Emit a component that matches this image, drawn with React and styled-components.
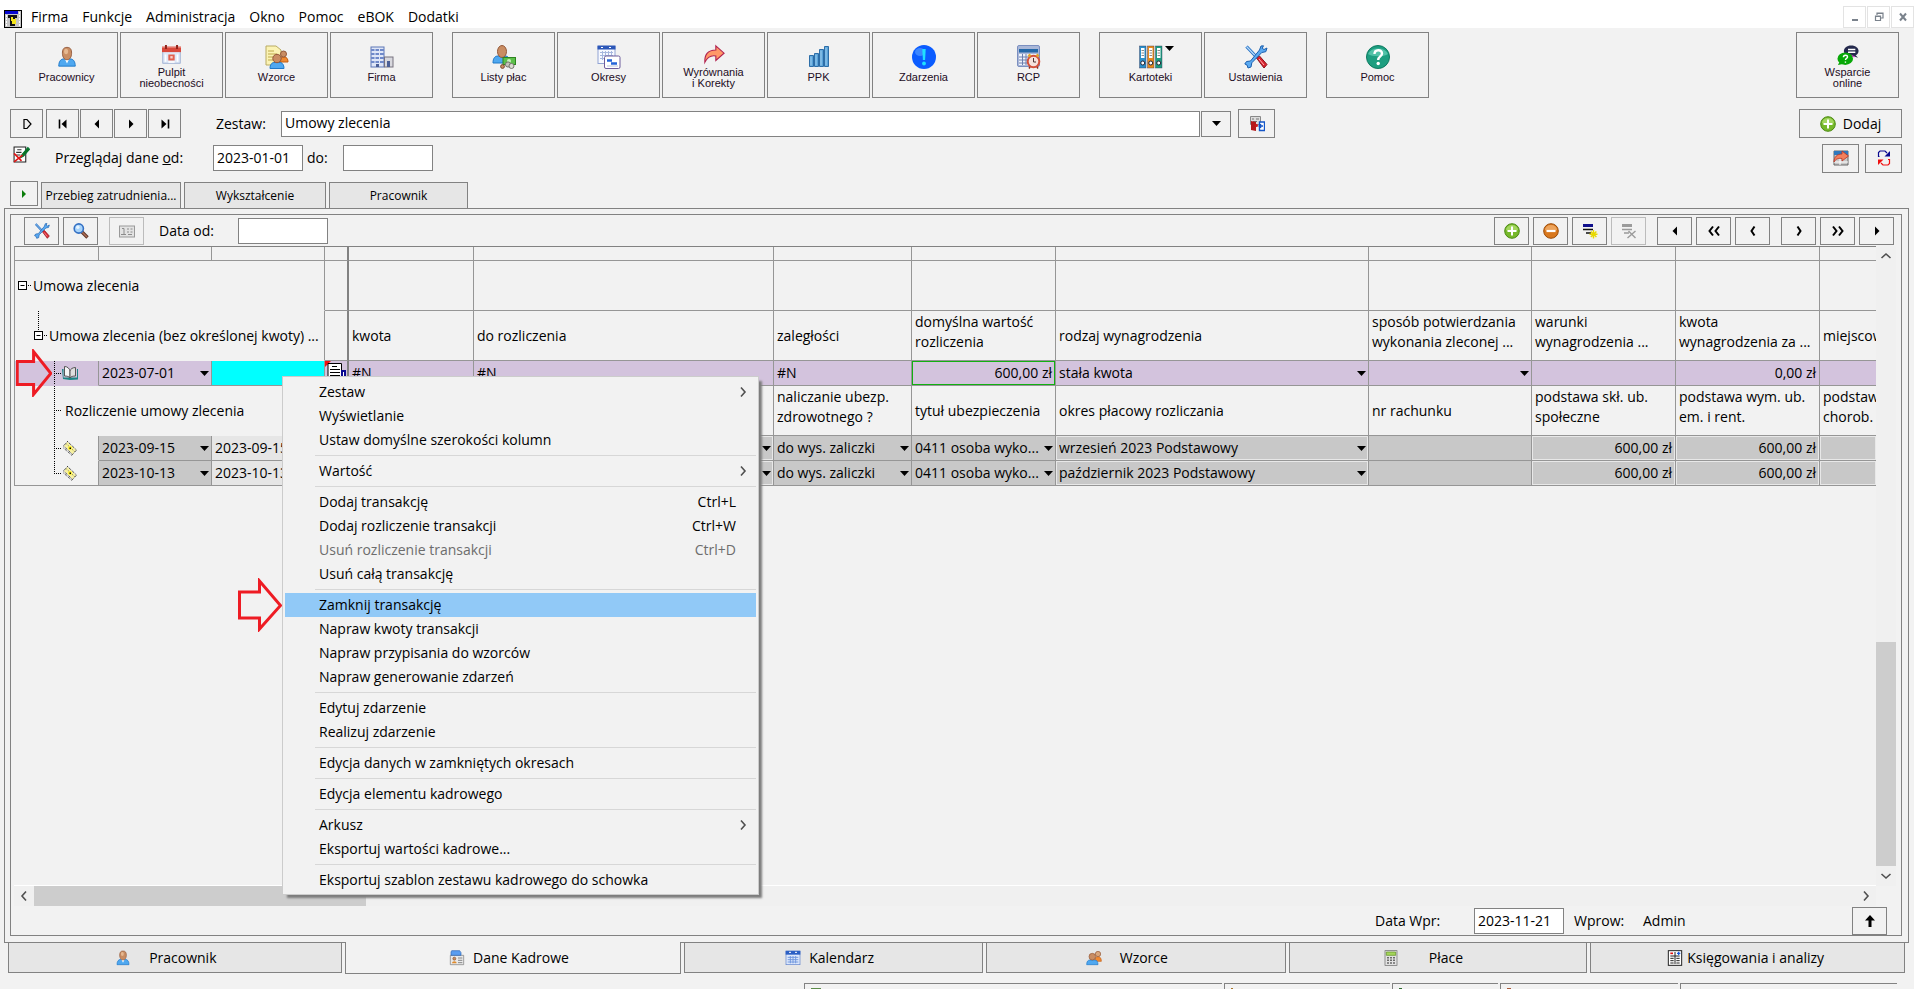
import React from 'react';
import styled, { createGlobalStyle, css } from 'styled-components';

const line = '#828282';
const softLine = '#969696';
const face = '#f2f2f2';

const GlobalStyle = createGlobalStyle`
  * {
    box-sizing: border-box;
  }

  body {
    margin: 0;
    background: ${face};
    color: #000;
    font-family: 'Open Sans', 'Noto Sans', sans-serif;
    font-size: 14px;
    line-height: 20px;
  }

  button, input, select {
    margin: 0;
    color: inherit;
    font: inherit;
  }
`;

const Page = styled.div`
  display: flex;
  flex-direction: column;
  height: 100vh;
  overflow: hidden;
`;

const Svg = styled.svg`
  display: block;
  flex: none;
`;

/* ---------- icons ---------- */

const Icon = ({ size = 16, box = 24, children }) => (
  <Svg width={size} height={size} viewBox={`0 0 ${box} ${box}`} aria-hidden="true">
    {children}
  </Svg>
);

const PersonIcon = ({ size }) => (
  <Icon size={size}>
    <path d="M3 22c0-5 2-8 6-8h6c4 0 6 3 6 8z" fill="#4fa8f0" stroke="#1f78c8" />
    <path d="M9.500 14h5l-2.500 5z" fill="#fff" />
    <path d="M12 1.500c4 0 5 2.500 5 6.500 0 4-2 7-5 7s-5-3-5-7c0-4 1-6.500 5-6.500z" fill="#c98d63" stroke="#94593a" />
    <ellipse cx="11" cy="6" rx="2.200" ry="3" fill="#e6b890" />
  </Icon>
);

const AbsenceIcon = ({ size }) => (
  <Icon size={size}>
    <rect x="1" y="7" width="22" height="16" fill="#dfe8f7" stroke="#8ea3cc" />
    <path d="M0 2h24v7H0z" fill="#d9483b" />
    <path d="M0 3h24" stroke="#ee8a80" />
    <path d="M5 0v5M19 0v5" stroke="#8f231a" strokeWidth="2.500" />
    <rect x="8" y="12" width="8" height="7.500" fill="#e2604f" />
    <rect x="10.500" y="14" width="3" height="3" fill="#f8d0ca" />
    <path d="M4.500 12v9M19.500 12v9M8 21.500h8" stroke="#fff" strokeWidth="2" />
  </Icon>
);

const PatternsIcon = ({ size }) => (
  <Icon size={size}>
    <path d="M1 1h10l5 4v15H1z" fill="#fbf3b4" stroke="#b9ab62" />
    <path d="M3 6h6M3 9h9M3 12h7M3 15h5" stroke="#bda94a" />
    <path d="M15 17c0-3 1-5 4-5s4 2 4 5z" fill="#f08a32" stroke="#c25e12" />
    <circle cx="18.500" cy="9" r="3" fill="#c98d63" stroke="#94593a" />
    <path d="M5 23.500c0-4 2-6 4-6h6c2 0 4 2 4 6z" fill="#4fa8f0" stroke="#1f78c8" />
    <circle cx="12" cy="13.500" r="4.200" fill="#c98d63" stroke="#94593a" />
  </Icon>
);

const PeopleIcon = ({ size }) => (
  <Icon size={size}>
    <path d="M13 17c0-5 2-7 5-7s5 2 5 7z" fill="#f08a32" stroke="#c25e12" />
    <circle cx="18" cy="6" r="4" fill="#d9a67c" stroke="#94593a" />
    <path d="M1 22c0-5 2-7 5-7h7c3 0 5 2 5 7z" fill="#4fa8f0" stroke="#1f78c8" />
    <circle cx="9.500" cy="10" r="5" fill="#c98d63" stroke="#94593a" />
  </Icon>
);

const BuildingIcon = ({ size }) => (
  <Icon size={size}>
    <rect x="1" y="2" width="13" height="20" fill="#dfe6f7" stroke="#5d76b6" />
    <path d="M1 5h13M1 9h13M1 13h13M1 17h13" stroke="#6f89c9" strokeWidth="2" />
    <path d="M5 3v15M9.500 3v15" stroke="#dfe6f7" />
    <rect x="14.500" y="12" width="8.500" height="10" fill="#d8d8de" stroke="#77727f" />
    <path d="M6 19h3v3H6zM17 16h3v6h-3z" fill="#4b5f96" />
  </Icon>
);

const PayrollIcon = ({ size }) => (
  <Icon size={size}>
    <path d="M1 18c0-5 2-7 5-7h7c3 0 5 2 5 7z" fill="#4fa8f0" stroke="#1f78c8" />
    <ellipse cx="10" cy="6.500" rx="4.500" ry="6" fill="#c98d63" stroke="#94593a" />
    <rect x="11" y="12.500" width="12.500" height="7" fill="#5cc04a" stroke="#2d8420" />
    <circle cx="17" cy="16" r="2" fill="#c9f0bd" />
    <circle cx="16" cy="19.500" r="2.600" fill="#c3c3bb" stroke="#74746c" />
    <circle cx="19.500" cy="21" r="2.500" fill="#dadad2" stroke="#74746c" />
    <circle cx="10.500" cy="21.500" r="1.900" fill="#c98d63" stroke="#7a4a30" />
  </Icon>
);

const PeriodsIcon = ({ size }) => (
  <Icon size={size}>
    <rect x="1" y="1.500" width="17" height="17" fill="#f7f9ff" stroke="#91a4d4" />
    <path d="M.5.5h18v4H.5z" fill="#2c57b8" />
    <path d="M4 2.500h2M12 2.500h2" stroke="#fff" />
    <path d="M3 7.500h13M3 10.500h13M3 13.500h13M5.500 6v9M8.500 6v9M11.500 6v9M14.500 6v9" stroke="#a6b7de" />
    <rect x="7.500" y="11" width="15.500" height="12.500" rx="1.500" fill="#fff" stroke="#6d5c9c" />
    <path d="M10 15.500h5M14 18.500h6" stroke="#2464d8" strokeWidth="2.500" />
    <path d="M10 21h11" stroke="#b9c2dc" />
  </Icon>
);

const AdjustIcon = ({ size }) => (
  <Icon size={size}>
    <path d="M14 2l9 8-9 8v-5c-5-1-9 1-12 7C1.500 12 5 6.500 14 6.500z" fill="#ff9868" stroke="#b0204f" strokeWidth="1.200" />
  </Icon>
);

const BarsIcon = ({ size }) => (
  <Icon size={size}>
    <g fill="#5aa2d8" stroke="#2d6ea8">
      <path d="M2.500 10.500h4v11h-4zM7.500 8.500h4v13h-4zM12.500 4.500h4v17h-4zM17.500 1.500h4v20h-4z" />
    </g>
    <path d="M4 11.500v9M9 9.500v11M14 5.500v15M19 2.500v18" stroke="#9fd0f0" />
  </Icon>
);

const EventIcon = ({ size }) => (
  <Icon size={size}>
    <circle cx="12" cy="12" r="12" fill="#0b5cff" />
    <ellipse cx="8" cy="7" rx="5" ry="4" fill="#3b86ff" />
    <path d="M10.300 4h3.400l-.6 11h-2.200z" fill="#1fe0ff" />
    <circle cx="12" cy="18.500" r="1.900" fill="#1fe0ff" />
  </Icon>
);

const ClockCalendarIcon = ({ size }) => (
  <Icon size={size}>
    <rect x=".5" y=".5" width="22" height="21" rx="1.500" fill="#a9b7d8" stroke="#7b8fc0" />
    <rect x="2" y="4" width="19" height="3.500" fill="#2468a8" />
    <path d="M2 9h19v11H2z" fill="#eef2fb" />
    <path d="M2 12h10M2 15h8M2 18h8M5.500 9v11M9 9v11" stroke="#6c7fae" />
    <circle cx="16.500" cy="16.500" r="5.800" fill="#f6e2dc" stroke="#d4503a" strokeWidth="2" />
    <path d="M11.500 11.500l2-2M21.500 11.500l-2-2" stroke="#e0a528" strokeWidth="2.500" />
    <path d="M16.500 13v4h2.500" fill="none" stroke="#4c3333" />
    <path d="M13 22l-1 1.500M20 22l1 1.500" stroke="#8c2c1c" strokeWidth="1.500" />
  </Icon>
);

const BindersIcon = ({ size }) => (
  <Icon size={size}>
    {[['#2b8fca', 0], ['#e88a1c', 8], ['#1c9c80', 16]].map(([color, x]) => (
      <g key={x}>
        <rect x={x + 0.5} y="1" width="6.500" height="22" fill={color} stroke="#335" strokeWidth=".4" />
        <rect x={x + 2} y="3" width="3.500" height="10" fill="#fff" />
        <path d={`M${x + 2.500} 5.500h2.500M${x + 2.500} 8h2.500M${x + 2.500} 10.500h2.500`} stroke="#8a8a8a" />
        <circle cx={x + 3.750} cy="18" r="2" fill="#fff" stroke="#223" />
      </g>
    ))}
  </Icon>
);

const ToolsIcon = ({ size }) => (
  <Icon size={size}>
    <path d="M2.500 1.500l9.500 10" stroke="#1f6dc4" strokeWidth="3.200" />
    <path d="M2.500 1.500l9.500 10" stroke="#b9dcfa" strokeWidth="1.200" />
    <path d="M12.500 13l3-2 7.500 8.500-3 3.500z" fill="#d9232f" stroke="#8a1119" />
    <path d="M15 14l5 6" stroke="#ffb3b3" />
    <path d="M17 1l-1.500 4-9 11-4 .5L.8 19l2.200 1 1 3 3-1 .8-4.200 10-10.300 4-.8L23 3l-3 1.500-1.800-1.200L19.500.8z" fill="#5aaaf2" stroke="#1b5fae" />
  </Icon>
);

const HelpIcon = ({ size }) => (
  <Icon size={size}>
    <circle cx="12" cy="12" r="11.500" fill="#1d9e80" stroke="#0e7a60" />
    <path d="M2 9a10.500 8 0 0 1 20 0c-4 3-16 3-20 0z" fill="#52c2a8" />
    <path d="M8.500 9c0-5 7.500-5 7.500-.5 0 3-3.800 2.800-3.800 6.500" fill="none" stroke="#fff" strokeWidth="2.400" />
    <circle cx="12.200" cy="18.500" r="1.700" fill="#fff" />
  </Icon>
);

const SupportIcon = ({ size }) => (
  <Icon size={size}>
    <path d="M15.500 1.500c5 0 8 2.800 8 6s-3 6-8 6-8-2.800-8-6 3-6 8-6z" fill="#252a4d" />
    <path d="M19 11l4 4-6-2z" fill="#252a4d" />
    <path d="M12 6h8M12 9h8" stroke="#fff" strokeWidth="1.500" />
    <path d="M15 12.500l4 1.500" stroke="#e03fd8" strokeWidth="1.500" />
    <ellipse cx="9" cy="16" rx="8.500" ry="6.800" fill="#08a808" />
    <path d="M3 19l-2 4 7-1.500z" fill="#08a808" />
    <path d="M7 14.500c0-3 4.500-3 4.500-.3 0 1.600-2.300 1.400-2.300 3.300M9.200 19v1.500" fill="none" stroke="#fff" strokeWidth="1.500" />
  </Icon>
);

const PlusIcon = ({ size }) => (
  <Icon size={size} box={16}>
    <circle cx="8" cy="8" r="7.300" fill="#76b82a" stroke="#4b8a12" />
    <path d="M2 7a6 5 0 0 1 12 0c-3 1.500-9 1.500-12 0z" fill="#a3d65e" />
    <path d="M8 3.500v9M3.500 8h9" stroke="#fff" strokeWidth="2" />
  </Icon>
);

const MinusIcon = ({ size }) => (
  <Icon size={size} box={16}>
    <circle cx="8" cy="8" r="7.300" fill="#d9781e" stroke="#9c4c08" />
    <path d="M2 7a6 5 0 0 1 12 0c-3 1.500-9 1.500-12 0z" fill="#eda45c" />
    <path d="M3.500 8h9" stroke="#fff" strokeWidth="2.200" />
  </Icon>
);

const MagnifierIcon = () => (
  <Icon box={16}>
    <path d="M9 9l5.500 5.500" stroke="#5e3528" strokeWidth="3.400" />
    <path d="M9 9l5 5" stroke="#b07058" strokeWidth="1.400" />
    <circle cx="5.800" cy="5.500" r="4.600" fill="#a8d4fb" stroke="#3571c4" strokeWidth="1.600" />
    <circle cx="4.800" cy="4.300" r="1.700" fill="#e8f5ff" />
  </Icon>
);

const CounterIcon = () => (
  <Icon box={16}>
    <rect x=".5" y="3" width="15" height="11" fill="#e3e3e3" stroke="#999" />
    <path d="M3 5.500h2v6M2 11.500h5M8 6h2M11.500 6h2M8 9h2M11.500 9h2M9 11.500h4" fill="none" stroke="#8c8c8c" />
  </Icon>
);

const ListStarIcon = () => (
  <Icon box={16}>
    <path d="M1 2.500h10" stroke="#10108c" strokeWidth="3" />
    <path d="M1 6.500h10M4 10h5" stroke="#111" strokeWidth="1.500" />
    <path d="M11.500 7v8.500M7.500 11.200h8M8.800 8.500l5.600 5.600M14.400 8.500l-5.600 5.600" stroke="#e8d800" strokeWidth="1.400" />
  </Icon>
);

const ListCrossIcon = () => (
  <Icon box={16}>
    <path d="M1 2.500h10" stroke="#9b9b9b" strokeWidth="3" />
    <path d="M1 6.500h10M3 10h5" stroke="#9b9b9b" strokeWidth="1.500" />
    <path d="M7.500 8l7 7M14.500 8l-8 7" stroke="#9b9b9b" strokeWidth="1.400" />
  </Icon>
);

const DoorIcon = () => (
  <Icon box={16}>
    <path d="M1.500.5h10v8h-10z" fill="#dcdcdc" stroke="#888" />
    <path d="M3 3h2M7 3h3M4 5.500h4" stroke="#777" />
    <path d="M2 5l5 1v9l-5-1z" fill="#b5191b" />
    <path d="M10.500 6h5v8.500h-5z" fill="#fff" stroke="#1456c8" strokeWidth="1.400" />
    <path d="M9.500 10H14M11.500 8v4" stroke="#1456c8" strokeWidth="1.500" />
    <circle cx="7.500" cy="9.500" r="1.500" fill="#d01818" />
  </Icon>
);

const ExportIcon = () => (
  <Icon box={16}>
    <path d="M1 1h14v14H1z" fill="#c8c8c8" stroke="#666" />
    <path d="M1 1h14v4H1z" fill="#2f79bd" />
    <path d="M1 12h14M7 9v6" stroke="#fff" />
    <path d="M9 1l6.500 5L9 11V8.500C6 8 3 8.500 1 12 1 7 4 4 9 4z" fill="#f4805c" stroke="#b83224" strokeWidth=".8" />
  </Icon>
);

const RefreshIcon = () => (
  <Icon box={16}>
    <path d="M3.500 6.500h-1v-4l1.500-1.500h5l2 2" fill="none" stroke="#0a0a90" strokeWidth="1.200" />
    <path d="M14 1v5.500H8.500z" fill="#0a0a90" />
    <path d="M12 9.500h1.500v4L12 15H7l-2-2" fill="none" stroke="#f01010" strokeWidth="1.200" />
    <path d="M2 15V9.500h5.500z" fill="#f01010" />
  </Icon>
);

const AppIcon = () => (
  <Icon size={18} box={18}>
    <rect x=".5" y=".5" width="17" height="17" fill="#c6c6c6" stroke="#000" />
    <path d="M1 1h13v3H1z" fill="#0808d0" />
    <path d="M4 5h9v3h-2v8H6V8H4z" fill="#111" />
    <path d="M7 7h2v2h3v5H8v-3H7z" fill="#f5e61b" />
    <path d="M2.500 5v11M15.500 2v14" stroke="#fff" strokeDasharray="2 1" />
  </Icon>
);

const DocCheckIcon = () => (
  <Icon size={17} box={16}>
    <path d="M1 1h11v14H1z" fill="#fff" stroke="#222" />
    <path d="M4 3.500h4M3 6h5M3 8.500h4" stroke="#333" />
    <path d="M7 11l3-1.500L15.500 3 14 1.500 8.500 8z" fill="#12701c" stroke="#073" />
    <path d="M1 7l7 7M9 8.500L1 15" stroke="#e11414" strokeWidth="1.500" />
  </Icon>
);

const BookIcon = () => (
  <Icon box={16}>
    <path d="M0 4h1.500v8.500H15V4h1v10.500l-8 .5-7-1z" fill="#1b8584" />
    <path d="M2.500 1.500c3 0 5 2 5.500 4.500v7c-1-1.500-3-2-5.500-2z" fill="#f6f6f6" stroke="#555" />
    <path d="M8 6c.5-2 2.500-3.500 5.500-3.500V11c-2.500 0-4.500.5-5.500 2z" fill="#dedede" stroke="#555" />
  </Icon>
);

const BanknoteIcon = () => (
  <Icon box={16}>
    <path d="M5.500 1.500l9 8.500-4 4.500-9-8.500z" fill="#f7f1a0" stroke="#fff" />
    <path d="M5.500 1.500l9 8.500-4 4.500-9-8.500z" fill="none" stroke="#000" strokeDasharray="1 1" />
    <path d="M4.500 4l8 7.500" stroke="#7d7a3a" strokeDasharray="1 1.500" />
    <circle cx="8" cy="8" r="2" fill="#fff12a" />
    <path d="M7.500 7.500h1.500v1.500H7.500z" fill="#000" />
    <path d="M1.500 8l9 8" stroke="#333" strokeDasharray="1 1" />
  </Icon>
);

const NoteIcon = () => (
  <Svg width="23" height="24" viewBox="0 0 23 24" aria-hidden="true">
    <path d="M0 0h6l-6 6z" fill="#f01010" />
    <path d="M3 2.500h13.500v15H3z" fill="#fff" stroke="#000" />
    <path d="M7 5.500h5M5 8.500h10M5 11.500h10M5 14.500h10" stroke="#000" />
    <path d="M16 9h5v8h-5z" fill="#0a0a90" />
    <path d="M18.500 11v4" stroke="#fff" />
  </Svg>
);

const CardIcon = () => (
  <Icon>
    <path d="M2 8h20v14H2z" fill="#e9e9e9" stroke="#777" />
    <path d="M4 1h12l2 3v4H3V3z" fill="#5a9df0" stroke="#2a64b4" />
    <circle cx="8" cy="13" r="2.200" fill="#c98d63" stroke="#80502c" />
    <path d="M4.500 20c0-4 7-4 7 0z" fill="#e08a2a" />
    <path d="M13.500 12H20M13.500 15.500H20M13.500 19H20" stroke="#888" strokeWidth="1.500" />
  </Icon>
);

const CalendarIcon = () => (
  <Icon>
    <rect x="1.500" y="2" width="21" height="20" fill="#dce7fb" stroke="#5d80cc" />
    <path d="M1 1h22v6H1z" fill="#2b5fc4" />
    <path d="M6 3.500h3M15 3.500h3" stroke="#fff" strokeWidth="1.500" />
    <path d="M4 11h16M4 14.500h16M4 18h16M8 9v11M12 9v11M16 9v11" stroke="#6e94dd" strokeWidth="1.400" />
  </Icon>
);

const CalculatorIcon = () => (
  <Icon>
    <rect x="3" y="1" width="18" height="22" fill="#e2e2e2" stroke="#666" />
    <path d="M5 3h14v5H5z" fill="#a4d65a" stroke="#5d8c20" />
    <path d="M6 11.500h12M6 15.500h12M6 19.500h12" stroke="#6b6b6b" strokeWidth="2.200" strokeDasharray="3 1.500" />
  </Icon>
);

const LedgerIcon = () => (
  <Icon>
    <rect x="2" y="1" width="20" height="22" fill="#fff" stroke="#222" strokeWidth="1.500" />
    <path d="M5 5h4" stroke="#e01010" strokeWidth="2.500" />
    <path d="M15 5h5M17.500 2.500v5" stroke="#1558e0" strokeWidth="2" />
    <path d="M12 3v18M5 9h14M5 12.500h5M14 12.500h5M5 16h5M14 16h5M5 19.500h5M14 19.500h5" stroke="#222" strokeWidth="1.500" />
  </Icon>
);

const glyphs = {
  record: <path d="M5 3.500h3l4 4.500-4 4.500H5z" fill="none" stroke="#000" strokeWidth="1.200" />,
  first: (
    <>
      <path d="M4.500 3.500v9" stroke="#000" strokeWidth="1.600" />
      <path d="M11.500 3.500v9L6.500 8z" />
    </>
  ),
  last: (
    <>
      <path d="M11.500 3.500v9" stroke="#000" strokeWidth="1.600" />
      <path d="M4.500 3.500v9l5-4.500z" />
    </>
  ),
  left: <path d="M10 3.500v9L5.500 8z" />,
  right: <path d="M6 3.500v9L10.500 8z" />,
  chevLeft: <path d="M9.500 3.500L6.500 8l3 4.500" fill="none" stroke="#000" strokeWidth="2" />,
  chevRight: <path d="M6.500 3.500l3 4.500-3 4.500" fill="none" stroke="#000" strokeWidth="2" />,
  chevLeft2: <path d="M7 3.500L3.500 8 7 12.500M13 3.500L9.500 8l3.500 4.500" fill="none" stroke="#000" strokeWidth="2" />,
  chevRight2: <path d="M3 3.500L6.500 8 3 12.500M9 3.500l3.500 4.500L9 12.500" fill="none" stroke="#000" strokeWidth="2" />,
  up: <path d="M8 2l5 5.500H9.500V14h-3V7.500H3z" />,
  green: <path d="M6 4v8l4-4z" fill="#0a7d0a" />,
};

const Glyph = ({ name }) => <Icon box={16}>{glyphs[name]}</Icon>;

const Caret = () => (
  <Svg width="9" height="5" viewBox="0 0 9 5" aria-hidden="true">
    <path d="M0 0h9L4.500 5z" />
  </Svg>
);

const Angle = ({ dir = 'right' }) => {
  const turn = { right: 0, down: 90, left: 180, up: 270 }[dir];
  return (
    <Svg width="12" height="12" viewBox="0 0 12 12" aria-hidden="true">
      <path d="M4 1.500L8 6l-4 4.500" fill="none" stroke="#505050" strokeWidth="1.600" transform={`rotate(${turn} 6 6)`} />
    </Svg>
  );
};

/* ---------- menu bar ---------- */

const MenuBar = styled.header`
  display: flex;
  align-items: flex-end;
  flex: none;
  gap: 1px;
  height: 28px;
  padding-left: 4px;
  background: #fff;
`;

const MenuLinks = styled.nav`
  display: flex;
  flex: 1;
  gap: 14px;
  padding: 0 0 1px 8px;
`;

const MenuLink = styled.a`
  color: inherit;
  text-decoration: none;
`;

const WindowButton = styled.button`
  display: flex;
  align-items: center;
  justify-content: center;
  width: 23px;
  height: 22px;
  padding: 0;
  border: 1px solid #e3e3e3;
  background: #fff;
`;

/* ---------- big toolbar ---------- */

const Toolbar = styled.div`
  display: flex;
  flex: none;
  gap: 19px;
  padding: 4px 15px 11px;
`;

const ToolGroup = styled.div`
  display: flex;
  gap: 2px;

  &:last-child {
    margin-left: auto;
  }
`;

const ToolButton = styled.button`
  display: flex;
  flex-direction: column;
  align-items: center;
  width: 103px;
  height: 66px;
  padding: 12px 0 0;
  border: 1px solid ${line};
  background: ${face};
  color: #1d0c24;
  font-family: 'Liberation Sans', sans-serif;
  font-size: 11px;
  line-height: 11px;
`;

const ToolIcon = styled.span`
  position: relative;
  display: flex;
  align-items: center;
  height: ${({ $compact }) => ($compact ? '19px' : '24px')};
  margin-bottom: 3px;
`;

const ToolCaret = styled.span`
  position: absolute;
  top: 1px;
  left: 26px;
`;

const ToolLabel = styled.span`
  white-space: pre-line;
`;

const toolGroups = [
  [
    ['Pracownicy', PersonIcon, 22],
    ['Pulpit\nnieobecności', AbsenceIcon, 19],
    ['Wzorce', PatternsIcon, 24],
    ['Firma', BuildingIcon, 24],
  ],
  [
    ['Listy płac', PayrollIcon, 24],
    ['Okresy', PeriodsIcon, 24],
    ['Wyrównania\ni Korekty', AdjustIcon, 22],
    ['PPK', BarsIcon, 24],
    ['Zdarzenia', EventIcon, 24],
    ['RCP', ClockCalendarIcon, 24],
  ],
  [
    ['Kartoteki', BindersIcon, 24],
    ['Ustawienia', ToolsIcon, 24],
  ],
  [['Pomoc', HelpIcon, 24]],
  [['Wsparcie\nonline', SupportIcon, 22]],
];

/* ---------- form rows ---------- */

const FormRow = styled.div`
  display: flex;
  align-items: center;
  flex: none;
  height: ${({ $height }) => $height}px;
  margin-bottom: ${({ $after = 0 }) => $after}px;
  padding: 0 12px 0 10px;
`;

const SmallButton = styled.button`
  display: flex;
  align-items: center;
  justify-content: center;
  flex: none;
  width: ${({ $width = 35 }) => $width}px;
  height: ${({ $height = 29 }) => $height}px;
  padding: 0;
  gap: 7px;
  border: 1px solid ${line};
  background: ${face};

  &:disabled {
    border-color: #bcbcbc;
  }
`;

const ButtonRow = styled.div`
  display: flex;
  gap: ${({ $gap }) => $gap}px;
  margin-left: ${({ $left = 0 }) => $left}px;
`;

const RightSide = styled.div`
  display: flex;
  gap: ${({ $gap = 6 }) => $gap}px;
  margin-left: auto;
`;

const RowIcon = styled.span`
  padding: 0 0 7px 3px;
`;

const field = css`
  height: 26px;
  padding: 0 3px 1px;
  border: 1px solid ${line};
  border-radius: 0;
  outline: none;
  background: #fff;
`;

const TextInput = styled.input`
  ${field}
  flex: none;
  width: 90px;
`;

const SetSelect = styled.select`
  ${field}
  appearance: none;
  flex: 0 1 919px;
  min-width: 0;
  margin-right: 1px;
`;

const FieldLabel = styled.label`
  flex: none;
  width: ${({ $width }) => $width}px;
  margin-left: ${({ $left = 0 }) => $left}px;
`;

/* ---------- tabs ---------- */

const TabRow = styled.div`
  display: flex;
  align-items: flex-start;
  flex: none;
  gap: 3px;
  height: 27px;
  padding-left: 10px;
`;

const TopTab = styled.button`
  width: ${({ $width }) => $width}px;
  height: 26px;
  margin-top: 1px;
  padding: 0;
  border: 1px solid ${line};
  border-bottom: 0;
  background: #e6e6e6;
  font-size: 12px;
  white-space: nowrap;
`;

const Panel = styled.main`
  display: flex;
  flex: 1;
  min-height: 0;
  margin: 0 5px 0 4px;
  padding: 5px 6px 6px 5px;
  border: 1px solid ${line};
`;

const InnerPanel = styled.section`
  display: flex;
  flex-direction: column;
  flex: 1;
  min-width: 0;
  border: 1px solid ${line};
`;

const GridToolbar = styled.div`
  display: flex;
  align-items: center;
  flex: none;
  gap: 4px;
  height: 31px;
  padding: 0 7px 0 13px;
`;

/* ---------- data grid ---------- */

const GridArea = styled.div`
  position: relative;
  display: grid;
  grid-template-columns: minmax(0, 1fr) 20px;
  grid-template-rows: minmax(0, 1fr) 20px;
  flex: 1;
  min-height: 0;
  margin: 0 5px 0 3px;
`;

const GridView = styled.div`
  overflow: hidden;
  border-bottom: 1px solid #fff;
`;

const Grid = styled.table`
  width: 100%;
  table-layout: fixed;
  border-collapse: separate;
  border-spacing: 0;
  border-top: 1px solid ${line};
  border-left: 1px solid ${softLine};
`;

const Row = styled.tr`
  height: ${({ $height }) => $height}px;
`;

const tones = {
  plain: 'transparent',
  violet: '#d3c3dd',
  grey: '#c8c8c8',
  light: '#e6e6e6',
  cyan: '#00ffff',
};

const Cell = styled.td`
  position: relative;
  height: inherit;
  padding: 0 3px;
  overflow: ${({ $open }) => ($open ? 'visible' : 'hidden')};
  border-right: ${({ $split }) => ($split ? 2 : 1)}px solid ${({ $split }) => ($split ? line : softLine)};
  border-bottom: 1px solid ${softLine};
  background: ${({ $tone = 'plain' }) => tones[$tone]};
  text-align: ${({ $right }) => ($right ? 'right' : 'left')};
  white-space: pre;
  font-weight: 400;
  ${({ $inset }) => $inset && 'box-shadow: inset 0 0 0 1px #e8e8e8;'}
  ${({ $focus }) => $focus && 'box-shadow: inset 0 0 0 1px #12b012;'}
  ${({ $top }) => $top && 'padding-top: 1px; vertical-align: top;'}
  ${({ $noLine, $tone = 'plain' }) => $noLine && `border-bottom-color: ${tones[$tone]};`}
  ${({ $tree }) => $tree && 'padding: 0;'}

  &:last-child {
    border-right: 0;
  }
`;

const TreeCell = styled.div`
  display: flex;
  align-items: center;
  height: ${({ $height }) => $height}px;
`;

const DropCell = styled.div`
  display: flex;
  align-items: center;
  margin: 0 -1px 0 0;
`;

const CellSelect = styled.select`
  appearance: none;
  flex: 1;
  min-width: 0;
  height: 22px;
  padding: 0;
  border: 0;
  outline: none;
  background: transparent;
`;

const Branch = ({ width, height, x, from = 0, to, box, stub }) => {
  const mid = Math.floor(height / 2) + 0.5;
  return (
    <Svg width={width} height={height} viewBox={`0 0 ${width} ${height}`} aria-hidden="true">
      <g stroke="#000" strokeDasharray="1 1" fill="none">
        {to > 0 && <path d={`M${x + 0.5} ${from}V${to}`} />}
        <path d={`M${x} ${mid}H${x + stub}`} />
      </g>
      {box && (
        <>
          <rect x={x - 3.5} y={mid - 4} width="8" height="8" fill="#fff" stroke="#000" />
          <path d={`M${x - 1.5} ${mid}h4`} stroke="#000" />
        </>
      )}
    </Svg>
  );
};

const Drop = ({ value, label }) => (
  <DropCell>
    <CellSelect aria-label={label} defaultValue={value}>
      <option>{value}</option>
    </CellSelect>
    <Caret />
  </DropCell>
);

const PointerSpot = styled.span`
  position: absolute;
  z-index: 3;
  top: 50%;
  left: ${({ $left }) => $left}px;
  transform: translateY(-50%);
  pointer-events: none;
`;

const Pointer = ({ left, width, height }) => (
  <PointerSpot $left={left}>
    <Svg width={width} height={height} viewBox="0 0 44 54" preserveAspectRatio="none" aria-hidden="true">
      <path d="M1.500 14H21.500V3L42.500 27.500 21.500 51V40H1.500z" fill="none" stroke="#ee1c24" strokeWidth="3" vectorEffect="non-scaling-stroke" />
    </Svg>
  </PointerSpot>
);

const columns = [84, 113, 113, 24, 125, 300, 138, 144, 313, 163, 144, 144];

const transactionHeads = [
  'kwota',
  'do rozliczenia',
  'zaległości',
  'domyślna wartość\nrozliczenia',
  'rodzaj wynagrodzenia',
  'sposób potwierdzania\nwykonania zleconej ...',
  'warunki\nwynagrodzenia ...',
  'kwota\nwynagrodzenia za ...',
  'miejscowość',
];

const settlementHeads = [
  '',
  '',
  'naliczanie ubezp.\nzdrowotnego ?',
  'tytuł ubezpieczenia',
  'okres płacowy rozliczania',
  'nr rachunku',
  'podstawa skł. ub.\nspołeczne',
  'podstawa wym. ub.\nem. i rent.',
  'podstawa\nchorob.',
];

const settlements = [
  { date: '2023-09-15', paid: '2023-09-15', period: 'wrzesień 2023 Podstawowy' },
  { date: '2023-10-13', paid: '2023-10-13', period: 'październik 2023 Podstawowy' },
];

const HeadCells = ({ heads }) =>
  heads.map((text, i) => (
    <Cell as="th" key={i} $top={text.includes('\n')}>
      {text}
    </Cell>
  ));

const DataGrid = () => (
  <Grid>
    <colgroup>
      {columns.map((width, i) => (
        <col key={i} style={{ width }} />
      ))}
      <col />
    </colgroup>
    <tbody>
      <Row $height={14}>
        {[...columns, 0].map((_, i) => (
          <Cell key={i} $split={i === 3} />
        ))}
      </Row>
      <Row $height={50}>
        <Cell as="th" colSpan={3} $noLine $tree>
          <TreeCell $height={49}>
            <Branch width={18} height={49} x={7} stub={9} box />
            Umowa zlecenia
          </TreeCell>
        </Cell>
        <Cell $split />
        {transactionHeads.map((_, i) => (
          <Cell key={i} />
        ))}
      </Row>
      <Row $height={50}>
        <Cell as="th" colSpan={3} $noLine $tree>
          <TreeCell $height={49}>
            <Branch width={34} height={49} x={23} to={20} stub={9} box />
            Umowa zlecenia (bez określonej kwoty) ...
          </TreeCell>
        </Cell>
        <Cell $split />
        <HeadCells heads={transactionHeads} />
      </Row>
      <Row $height={25}>
        <Cell $tone="violet" $noLine $tree $open>
          <Pointer left={1} width={36} height={48} />
          <TreeCell $height={24}>
            <Branch width={47} height={24} x={39} to={24} stub={7} />
            <BookIcon />
          </TreeCell>
        </Cell>
        <Cell $tone="violet">
          <Drop value="2023-07-01" label="Data transakcji" />
        </Cell>
        <Cell $tone="cyan" />
        <Cell $tone="violet" $split $tree>
          <NoteIcon />
        </Cell>
        <Cell $tone="violet">#N</Cell>
        <Cell $tone="violet">#N</Cell>
        <Cell $tone="violet">#N</Cell>
        <Cell $tone="violet" $right $focus>600,00 zł</Cell>
        <Cell $tone="violet">
          <Drop value="stała kwota" label="rodzaj wynagrodzenia" />
        </Cell>
        <Cell $tone="violet">
          <Drop value="" label="sposób potwierdzania" />
        </Cell>
        <Cell $tone="violet" />
        <Cell $tone="violet" $right>0,00 zł</Cell>
        <Cell $tone="violet" />
      </Row>
      <Row $height={50}>
        <Cell as="th" colSpan={3} $noLine $tree>
          <TreeCell $height={49}>
            <Branch width={50} height={49} x={39} to={49} stub={7} />
            Rozliczenie umowy zlecenia
          </TreeCell>
        </Cell>
        <Cell $split />
        <HeadCells heads={settlementHeads} />
      </Row>
      {settlements.map(({ date, paid, period }, i) => (
        <Row $height={25} key={date}>
          <Cell $noLine={i === 0} $tree>
            <TreeCell $height={24}>
              <Branch width={47} height={24} x={39} to={i === 0 ? 24 : 12} stub={7} />
              <BanknoteIcon />
            </TreeCell>
          </Cell>
          <Cell $tone="grey">
            <Drop value={date} label="Data rozliczenia" />
          </Cell>
          <Cell $tone="light">{paid}</Cell>
          <Cell $tone="grey" $split />
          <Cell $tone="grey" />
          <Cell $tone="grey" $inset>
            <Drop value="" label="rozliczenie" />
          </Cell>
          <Cell $tone="grey">
            <Drop value="do wys. zaliczki" label="naliczanie ubezp. zdrowotnego" />
          </Cell>
          <Cell $tone="grey">
            <Drop value="0411 osoba wyko..." label="tytuł ubezpieczenia" />
          </Cell>
          <Cell $tone="grey" $inset>
            <Drop value={period} label="okres płacowy rozliczania" />
          </Cell>
          <Cell $tone="grey" />
          <Cell $tone="grey" $inset $right>600,00 zł</Cell>
          <Cell $tone="grey" $inset $right>600,00 zł</Cell>
          <Cell $tone="grey" $inset />
        </Row>
      ))}
    </tbody>
  </Grid>
);

/* ---------- scroll bars ---------- */

const VerticalBar = styled.div`
  display: grid;
  grid-template-rows: 20px 374fr 223fr 20px;
  justify-items: center;
  align-items: center;
  background: #f0f0f0;
`;

const VerticalThumb = styled.div`
  grid-row: 3;
  width: 100%;
  height: 100%;
  background: #cdcdcd;
`;

const HorizontalBar = styled.div`
  display: grid;
  grid-template-columns: 20px 332fr 1490fr 20px;
  align-items: center;
  justify-items: center;
  background: #f0f0f0;
`;

const HorizontalThumb = styled.div`
  width: 100%;
  height: 100%;
  background: #cdcdcd;
`;

const BarEnd = styled.span`
  grid-row: ${({ $row }) => $row};
  grid-column: ${({ $column }) => $column};
`;

/* ---------- context menu ---------- */

const ContextMenu = styled.div`
  position: absolute;
  z-index: 2;
  top: 130px;
  left: 268px;
  width: 477px;
  padding: 3px 2px 2px;
  border: 1px solid #ccc;
  background: ${face};
  box-shadow: 4px 4px 2px -1px #7d7d7d;
`;

const MenuItem = styled.button`
  position: relative;
  display: flex;
  align-items: center;
  width: 100%;
  height: 24px;
  padding: 0 7px 0 34px;
  border: 0;
  background: ${({ $active }) => ($active ? '#91c9f7' : 'transparent')};
  text-align: left;
  white-space: nowrap;

  &:disabled {
    color: #6d6d6d;
  }
`;

const MenuText = styled.span`
  flex: 1;
`;

const Shortcut = styled.span`
  margin-right: 13px;
`;

const Divider = styled.hr`
  margin: 3px 0 3px 30px;
  border: 0;
  border-top: 1px solid #d7d7d7;
`;

const menuSections = [
  [{ text: 'Zestaw', sub: true }, { text: 'Wyświetlanie' }, { text: 'Ustaw domyślne szerokości kolumn' }],
  [{ text: 'Wartość', sub: true }],
  [
    { text: 'Dodaj transakcję', keys: 'Ctrl+L' },
    { text: 'Dodaj rozliczenie transakcji', keys: 'Ctrl+W' },
    { text: 'Usuń rozliczenie transakcji', keys: 'Ctrl+D', disabled: true },
    { text: 'Usuń całą transakcję' },
  ],
  [
    { text: 'Zamknij transakcję', active: true },
    { text: 'Napraw kwoty transakcji' },
    { text: 'Napraw przypisania do wzorców' },
    { text: 'Napraw generowanie zdarzeń' },
  ],
  [{ text: 'Edytuj zdarzenie' }, { text: 'Realizuj zdarzenie' }],
  [{ text: 'Edycja danych w zamkniętych okresach' }],
  [{ text: 'Edycja elementu kadrowego' }],
  [{ text: 'Arkusz', sub: true }, { text: 'Eksportuj wartości kadrowe...' }],
  [{ text: 'Eksportuj szablon zestawu kadrowego do schowka' }],
];

const GridMenu = () => (
  <ContextMenu role="menu">
    {menuSections.map((items, i) => (
      <React.Fragment key={i}>
        {i > 0 && <Divider />}
        {items.map(({ text, keys, sub, active, disabled }) => (
          <MenuItem key={text} role="menuitem" $active={active} disabled={disabled}>
            {active && <Pointer left={-47} width={44} height={54} />}
            <MenuText>{text}</MenuText>
            {keys && <Shortcut>{keys}</Shortcut>}
            {sub && <Angle />}
          </MenuItem>
        ))}
      </React.Fragment>
    ))}
  </ContextMenu>
);

/* ---------- bottom ---------- */

const EntryRow = styled.div`
  display: flex;
  align-items: center;
  flex: none;
  height: 29px;
  padding-right: 14px;
`;

const EntryUser = styled.span`
  width: 209px;
`;

const BottomTabs = styled.nav`
  display: grid;
  grid-template-columns: 334fr 337fr 299fr 300fr 299fr 315fr;
  align-items: start;
  flex: none;
  gap: 3px;
  height: 40px;
  padding: 0 9px 0 8px;
`;

const BottomTab = styled.button`
  display: flex;
  align-items: center;
  justify-content: center;
  gap: ${({ $gap }) => $gap}px;
  min-width: 0;
  height: ${({ $active }) => ($active ? 32 : 30)}px;
  margin-top: ${({ $active }) => ($active ? -1 : 0)}px;
  padding: 0 ${({ $gap }) => $gap}px 0 0;
  border: 1px solid ${line};
  border-top: 0;
  background: ${({ $active }) => ($active ? face : '#e6e6e6')};
  white-space: nowrap;
`;

const bottomTabs = [
  ['Pracownik', PersonIcon, 18],
  ['Dane Kadrowe', CardIcon, 8],
  ['Kalendarz', CalendarIcon, 8],
  ['Wzorce', PeopleIcon, 18],
  ['Płace', CalculatorIcon, 30],
  ['Księgowania i analizy', LedgerIcon, 4],
];

const StatusBar = styled.footer`
  display: grid;
  grid-template-columns: 418fr 166fr 106fr 178fr 217fr;
  flex: none;
  gap: 2px;
  height: 6px;
  padding: 0 17px 0 804px;
`;

const StatusCell = styled.div`
  padding: 4px 0 0 6px;
  border-top: 1px solid ${line};
  border-left: 1px solid ${line};
`;

const StatusMark = styled.div`
  width: ${({ $width }) => $width}px;
  height: 1px;
  background: ${({ $color }) => $color};
`;

const statusMarks = [
  ['#5d8c4a', 10],
  ['#a8752a', 2],
  ['#2d6a2d', 3],
  ['#a8593a', 4],
  ['transparent', 1],
];

const App = () => (
  <Page>
    <GlobalStyle />
    <MenuBar>
      <AppIcon />
      <MenuLinks>
        {['Firma', 'Funkcje', 'Administracja', 'Okno', 'Pomoc', 'eBOK', 'Dodatki'].map((name) => (
          <MenuLink href="#" key={name}>
            {name}
          </MenuLink>
        ))}
      </MenuLinks>
      <WindowButton aria-label="Minimalizuj">
        <Icon size={12} box={12}>
          <path d="M3 9h6" stroke="#7a828c" strokeWidth="2" />
        </Icon>
      </WindowButton>
      <WindowButton aria-label="Przywróć">
        <Icon size={12} box={12}>
          <path d="M4 4V2h6v5H8M2.500 5h5v4.500h-5zM4 2.500h6M2.500 5.500h5" fill="none" stroke="#7a828c" strokeWidth="1.200" />
        </Icon>
      </WindowButton>
      <WindowButton aria-label="Zamknij">
        <Icon size={12} box={12}>
          <path d="M3 2.500l6 7M9 2.500l-6 7" stroke="#7a828c" strokeWidth="2" />
        </Icon>
      </WindowButton>
    </MenuBar>

    <Toolbar>
      {toolGroups.map((group, i) => (
        <ToolGroup key={i}>
          {group.map(([label, ToolGraphic, size]) => (
            <ToolButton key={label}>
              <ToolIcon $compact={label.includes('\n')}>
                <ToolGraphic size={size} />
                {label === 'Kartoteki' && (
                  <ToolCaret>
                    <Caret />
                  </ToolCaret>
                )}
              </ToolIcon>
              <ToolLabel>{label}</ToolLabel>
            </ToolButton>
          ))}
        </ToolGroup>
      ))}
    </Toolbar>

    <FormRow $height={29}>
      <SmallButton $width={33} aria-label="Rekord">
        <Glyph name="record" />
      </SmallButton>
      <ButtonRow $gap={1} $left={3}>
        <SmallButton $width={33} aria-label="Pierwszy"><Glyph name="first" /></SmallButton>
        <SmallButton $width={33} aria-label="Poprzedni"><Glyph name="left" /></SmallButton>
        <SmallButton $width={33} aria-label="Następny"><Glyph name="right" /></SmallButton>
        <SmallButton $width={33} aria-label="Ostatni"><Glyph name="last" /></SmallButton>
      </ButtonRow>
      <FieldLabel htmlFor="zestaw" $left={35} $width={65}>Zestaw:</FieldLabel>
      <SetSelect id="zestaw" defaultValue="Umowy zlecenia">
        <option>Umowy zlecenia</option>
      </SetSelect>
      <SmallButton $width={30} $height={26} aria-label="Rozwiń">
        <Caret />
      </SmallButton>
      <ButtonRow $gap={0} $left={7}>
        <SmallButton $width={37} aria-label="Zmień zestaw"><DoorIcon /></SmallButton>
      </ButtonRow>
      <RightSide>
        <SmallButton $width={103}>
          <PlusIcon size={16} />
          Dodaj
        </SmallButton>
      </RightSide>
    </FormRow>

    <FormRow $height={40} $after={3}>
      <RowIcon>
        <DocCheckIcon />
      </RowIcon>
      <FieldLabel htmlFor="od" $left={25} $width={158}>
        Przeglądaj dane <u>o</u>d:
      </FieldLabel>
      <TextInput id="od" defaultValue="2023-01-01" />
      <FieldLabel htmlFor="do" $left={4} $width={36}>do:</FieldLabel>
      <TextInput id="do" />
      <RightSide>
        <SmallButton $width={37} aria-label="Eksportuj"><ExportIcon /></SmallButton>
        <SmallButton $width={37} aria-label="Odśwież"><RefreshIcon /></SmallButton>
      </RightSide>
    </FormRow>

    <TabRow>
      <SmallButton $width={28} $height={25} aria-label="Pokaż">
        <Glyph name="green" />
      </SmallButton>
      <TopTab $width={140}>Przebieg zatrudnienia...</TopTab>
      <TopTab $width={142}>Wykształcenie</TopTab>
      <TopTab $width={139}>Pracownik</TopTab>
    </TabRow>

    <Panel>
      <InnerPanel>
        <GridToolbar>
          <SmallButton $height={28} aria-label="Narzędzia"><ToolsIcon size={16} /></SmallButton>
          <SmallButton $height={28} aria-label="Szukaj"><MagnifierIcon /></SmallButton>
          <ButtonRow $gap={0} $left={7}>
            <SmallButton $height={28} aria-label="Licznik" disabled><CounterIcon /></SmallButton>
          </ButtonRow>
          <FieldLabel htmlFor="data-od" $left={11} $width={75}>Data od:</FieldLabel>
          <TextInput id="data-od" />
          <RightSide $gap={11}>
            <ButtonRow $gap={4}>
              <SmallButton $height={28} aria-label="Dodaj wiersz"><PlusIcon size={16} /></SmallButton>
              <SmallButton $height={28} aria-label="Usuń wiersz"><MinusIcon size={16} /></SmallButton>
              <SmallButton $height={28} aria-label="Nowa lista"><ListStarIcon /></SmallButton>
              <SmallButton $height={28} aria-label="Usuń listę" disabled><ListCrossIcon /></SmallButton>
            </ButtonRow>
            {[['left', 'chevLeft2', 'chevLeft'], ['chevRight', 'chevRight2', 'right']].map((names) => (
              <ButtonRow $gap={4} key={names[0]}>
                {names.map((name) => (
                  <SmallButton $height={28} key={name} aria-label={name}>
                    <Glyph name={name} />
                  </SmallButton>
                ))}
              </ButtonRow>
            ))}
          </RightSide>
        </GridToolbar>

        <GridArea>
          <GridView>
            <DataGrid />
          </GridView>
          <VerticalBar>
            <BarEnd $row={1}><Angle dir="up" /></BarEnd>
            <VerticalThumb />
            <BarEnd $row={4}><Angle dir="down" /></BarEnd>
          </VerticalBar>
          <HorizontalBar>
            <Angle dir="left" />
            <HorizontalThumb />
            <BarEnd $column={4}><Angle /></BarEnd>
          </HorizontalBar>
          <GridMenu />
        </GridArea>

        <EntryRow>
          <RightSide>
            <FieldLabel htmlFor="data-wpr" $width={99}>Data Wpr:</FieldLabel>
          </RightSide>
          <TextInput id="data-wpr" defaultValue="2023-11-21" />
          <FieldLabel as="span" $left={10} $width={69}>Wprow:</FieldLabel>
          <EntryUser>Admin</EntryUser>
          <SmallButton $height={28} aria-label="Do góry"><Glyph name="up" /></SmallButton>
        </EntryRow>
      </InnerPanel>
    </Panel>

    <BottomTabs>
      {bottomTabs.map(([label, TabGraphic, gap]) => (
        <BottomTab key={label} $gap={gap} $active={label === 'Dane Kadrowe'}>
          <TabGraphic size={16} />
          {label}
        </BottomTab>
      ))}
    </BottomTabs>

    <StatusBar>
      {statusMarks.map(([color, width]) => (
        <StatusCell key={color}>
          <StatusMark $color={color} $width={width} />
        </StatusCell>
      ))}
    </StatusBar>
  </Page>
);

export default App;
